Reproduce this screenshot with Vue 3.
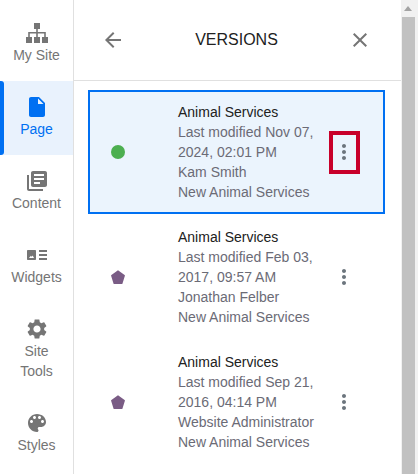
<template>
  <div class="app">
    <!-- left nav -->
    <nav class="side">
      <div
        v-for="item in navItems"
        :key="item.label"
        class="nav-item"
        :class="{ active: item.active }"
      >
        <svg class="nav-icon" viewBox="0 0 24 24" width="24" height="24">
          <path :d="item.icon" />
        </svg>
        <span class="nav-label">{{ item.label }}</span>
      </div>
    </nav>

    <section class="panel">
      <header class="panel-head">
        <svg class="head-icon" viewBox="0 0 24 24" width="24" height="24">
          <path d="M20 11H7.830l5.590-5.590L12 4l-8 8 8 8 1.410-1.410L7.830 13H20v-2z" />
        </svg>
        <h2 class="panel-title">VERSIONS</h2>
        <svg class="head-icon" viewBox="0 0 24 24" width="24" height="24">
          <path d="M19 6.410L17.590 5 12 10.590 6.410 5 5 6.410 10.590 12 5 17.590 6.410 19 12 13.410 17.590 19 19 17.590 13.410 12z" />
        </svg>
      </header>

      <ul class="versions">
        <li
          v-for="v in versions"
          :key="v.date"
          class="version"
          :class="{ current: v.current }"
        >
          <span class="status">
            <svg viewBox="0 0 14 14" width="14" height="14">
              <circle v-if="v.current" cx="7" cy="7" r="7" fill="#4caf50" />
              <path v-else d="M7 .2L13.600 5c.2.2.4.5.3.8l-2.400 7.600c-.1.3-.4.6-.8.6H3.300c-.4 0-.7-.3-.8-.6L.1 5.800c-.1-.3.1-.6.3-.8z" fill="#7a5c85" />
            </svg>
          </span>
          <div class="info">
            <div class="name">Animal Services</div>
            <div class="meta">Last modified {{ v.date }}</div>
            <div class="meta">{{ v.author }}</div>
            <div class="meta">New Animal Services</div>
          </div>
          <span class="more">
            <svg viewBox="0 0 24 24" width="24" height="24">
              <path d="M12 8c1.100 0 2-.9 2-2s-.9-2-2-2-2 .9-2 2 .9 2 2 2zm0 2c-1.100 0-2 .9-2 2s.9 2 2 2 2-.9 2-2-.9-2-2-2zm0 6c-1.100 0-2 .9-2 2s.9 2 2 2 2-.9 2-2-.9-2-2-2z" />
            </svg>
            <i v-if="v.current" class="callout"></i>
          </span>
        </li>
      </ul>
    </section>

    <!-- browser scrollbar -->
    <div class="scrollbar">
      <span class="arrow"></span>
      <span class="thumb"></span>
    </div>
  </div>
</template>

<script setup>
const navItems = [
  {
    label: 'My Site',
    icon: 'M9 2h6v6h-2.200v3h8v5H23v6h-6v-6h2.200v-3.400h-6.400V16H15v6H9v-6h2.200v-3.400H4.800V16H7v6H1v-6h2.200v-5h8V8H9z',
  },
  {
    label: 'Page',
    active: true,
    icon: 'M6 2c-1.100 0-1.990.9-1.990 2L4 20c0 1.100.89 2 1.990 2H18c1.100 0 2-.9 2-2V8l-6-6H6zm7 7V3.500L18.500 9H13z',
  },
  {
    label: 'Content',
    icon: 'M4 6H2v14c0 1.100.9 2 2 2h14v-2H4V6zm16-4H8c-1.100 0-2 .9-2 2v12c0 1.100.9 2 2 2h12c1.100 0 2-.9 2-2V4c0-1.100-.9-2-2-2zm-1 9H9V9h10v2zm-4 4H9v-2h6v2zm4-8H9V5h10v2z',
  },
  {
    label: 'Widgets',
    icon: 'M3 7h7c.6 0 1 .4 1 1v8c0 .6-.4 1-1 1H3c-.6 0-1-.4-1-1V8c0-.6.4-1 1-1zm1 8h5l-1.300-2.400-1 1.100-.8-.9zM14 7h8v2h-8zm0 4h8v2h-8zm0 4h8v2h-8z',
  },
  {
    label: 'Site Tools',
    icon: 'M19.140 12.940c.04-.3.06-.61.06-.94 0-.32-.02-.64-.07-.94l2.030-1.580c.18-.14.23-.41.12-.61l-1.920-3.320c-.12-.22-.37-.29-.59-.22l-2.390.96c-.5-.38-1.030-.7-1.620-.94l-.36-2.540c-.04-.24-.24-.41-.48-.41h-3.840c-.24 0-.43.17-.47.41l-.36 2.540c-.59.24-1.130.57-1.620.94l-2.390-.96c-.22-.08-.47 0-.59.22L2.740 8.870c-.12.21-.08.47.12.61l2.030 1.580c-.05.3-.09.63-.09.94s.02.64.07.94l-2.030 1.580c-.18.14-.23.41-.12.61l1.920 3.320c.12.22.37.29.59.22l2.390-.96c.5.38 1.030.7 1.620.94l.36 2.540c.05.24.24.41.48.41h3.840c.24 0 .44-.17.47-.41l.36-2.540c.59-.24 1.130-.56 1.620-.94l2.390.96c.22.08.47 0 .59-.22l1.920-3.320c.12-.22.07-.47-.12-.61l-2.010-1.580zM12 15.600c-1.980 0-3.600-1.620-3.600-3.600s1.620-3.600 3.600-3.600 3.600 1.620 3.600 3.600-1.620 3.600-3.600 3.600z',
  },
  {
    label: 'Styles',
    icon: 'M12 3c-4.970 0-9 4.030-9 9s4.030 9 9 9c.83 0 1.500-.67 1.500-1.500 0-.39-.15-.74-.39-1.010-.23-.26-.38-.61-.38-.99 0-.83.67-1.500 1.500-1.500H16c2.760 0 5-2.240 5-5 0-4.420-4.030-8-9-8zm-5.500 9c-.83 0-1.500-.67-1.500-1.500S5.670 9 6.500 9 8 9.670 8 10.500 7.330 12 6.500 12zm3-4C8.670 8 8 7.330 8 6.500S8.670 5 9.500 5s1.500.67 1.500 1.500S10.330 8 9.500 8zm5 0c-.83 0-1.500-.67-1.500-1.500S13.670 5 14.500 5s1.500.67 1.500 1.500S15.330 8 14.500 8zm3 4c-.83 0-1.500-.67-1.500-1.500S16.670 9 17.500 9s1.500.67 1.500 1.500-.67 1.500-1.500 1.500z',
  },
]

const versions = [
  { date: 'Nov 07, 2024, 02:01 PM', author: 'Kam Smith', current: true },
  { date: 'Feb 03, 2017, 09:57 AM', author: 'Jonathan Felber' },
  { date: 'Sep 21, 2016, 04:14 PM', author: 'Website Administrator' },
]
</script>

<style scoped>
.app {
  display: flex;
  width: 418px;
  height: 474px;
  overflow: hidden;
  background: #fff;
  font-family: "Liberation Sans", Arial, sans-serif;
  font-size: 14px;
  line-height: 20px;
}
.side {
  flex: 0 0 74px;
  box-sizing: border-box;
  padding-top: 7px;
  border-right: 1px solid #e0e0e0;
}
.nav-item {
  position: relative;
  display: flex;
  flex-direction: column;
  align-items: center;
  width: 73px;
  padding: 14px 10px 16px;
  box-sizing: border-box;
  text-align: center;
  color: #757575;
}
.nav-item.active {
  background: #e9f2fd;
  color: #0070f2;
}
.nav-item.active::before {
  content: "";
  position: absolute;
  left: 0;
  top: 0;
  bottom: 0;
  width: 4px;
  background: #0070f2;
  border-radius: 0 3px 3px 0;
}
.nav-icon { fill: #757575; display: block; margin-left: 1px; }
.active .nav-icon { fill: #0070f2; }
.panel {
  flex: 1;
  min-width: 0;
}
.panel-head {
  display: flex;
  align-items: center;
  justify-content: space-between;
  box-sizing: border-box;
  height: 81px;
  padding: 0 29px 0 27px;
  border-bottom: 1px solid #e0e0e0;
}
.head-icon { fill: #757575; }
.panel-title {
  margin: 0;
  font-size: 16px;
  font-weight: 400;
  color: #212121;
}
.versions {
  list-style: none;
  margin: 0;
  padding: 9px 16px 0 14px;
}
.version {
  display: flex;
  align-items: center;
  box-sizing: border-box;
  height: 124px;
  margin-bottom: 1px;
  padding: 10px 0 10px 21px;
  border: 2px solid transparent;
}
.version.current {
  background: #ebf4fd;
  border-color: #0070f2;
}
.status {
  display: flex;
  flex: 0 0 67px;
}
.info {
  flex: 1;
  min-width: 0;
}
.name { color: #212121; }
.meta { color: #6b6b76; }
.more {
  position: relative;
  display: flex;
  flex: 0 0 24px;
  margin-right: 27px;
  fill: #6c757d;
}
.callout {
  position: absolute;
  left: -3px;
  top: -9px;
  width: 31px;
  height: 43px;
  box-sizing: border-box;
  border: 4px solid #c8002a;
}
.scrollbar {
  position: relative;
  flex: 0 0 17px;
  background: #f1f1f1;
}
.arrow {
  position: absolute;
  left: 3px;
  top: 6px;
  border-left: 4px solid transparent;
  border-right: 4px solid transparent;
  border-bottom: 5px solid #a3a3a3;
}
.thumb {
  position: absolute;
  left: 1px;
  right: 3px;
  top: 17px;
  bottom: 0;
  background: #c1c1c1;
}
</style>

<style>
body { margin: 0; }
</style>
